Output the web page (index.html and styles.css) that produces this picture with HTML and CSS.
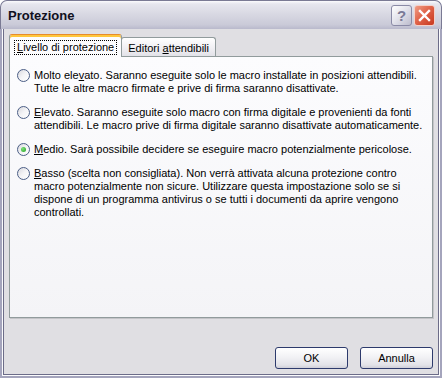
FILE: index.html
```html
<!DOCTYPE html>
<html lang="it">

<head>
    <meta charset="UTF-8">
    <title>Protezione</title>
    <link rel="stylesheet" href="styles.css">
</head>

<body>
    <div class="window">
        <!-- Title bar -->
        <div class="titlebar">
            <span class="title">Protezione</span>
            <div class="caption-buttons">
                <div class="cap help">?</div>
                <div class="cap close">
                    <svg width="13" height="13" viewBox="0 0 13 13">
                        <path d="M2 2 L11 11 M11 2 L2 11" stroke="#fff" stroke-width="2.4" stroke-linecap="square" />
                    </svg>
                </div>
            </div>
        </div>

        <div class="frame">
            <div class="client">
                <!-- Tabs -->
                <div class="tabs">
                    <div class="tab active"><span class="focus"><u>L</u>ivello di protezione</span></div>
                    <div class="tab">Editori <u>a</u>ttendibili</div>
                </div>

                <div class="panel">
                    <div class="option">
                        <span class="radio"></span>
                        <span class="text">Molto ele<u>v</u>ato. Saranno eseguite solo le macro installate in posizioni attendibili.<br>Tutte le altre macro firmate e prive di firma saranno disattivate.</span>
                    </div>
                    <div class="option">
                        <span class="radio"></span>
                        <span class="text"><u>E</u>levato. Saranno eseguite solo macro con firma digitale e provenienti da fonti<br>attendibili. Le macro prive di firma digitale saranno disattivate automaticamente.</span>
                    </div>
                    <div class="option">
                        <span class="radio checked"></span>
                        <span class="text"><u>M</u>edio. Sarà possibile decidere se eseguire macro potenzialmente pericolose.</span>
                    </div>
                    <div class="option">
                        <span class="radio"></span>
                        <span class="text"><u>B</u>asso (scelta non consigliata). Non verrà attivata alcuna protezione contro<br>macro potenzialmente non sicure. Utilizzare questa impostazione solo se si<br>dispone di un programma antivirus o se tutti i documenti da aprire vengono<br>controllati.</span>
                    </div>
                </div>

                <!-- Buttons -->
                <div class="actions">
                    <button class="btn">OK</button>
                    <button class="btn">Annulla</button>
                </div>
            </div>
        </div>
    </div>
</body>

</html>
```

FILE: styles.css
```css
/* Page */
body {
    margin: 0;
    background: #ffffff;
    font-family: "Liberation Sans", sans-serif;
    font-size: 11px;
    color: #000000;
}

/* Window frame */
.window {
    width: 442px;
    height: 378px;
    display: flex;
    flex-direction: column;
    background: #a4a4bc;
    border-radius: 7px 7px 0 0;
    overflow: hidden;
}

.titlebar {
    height: 29px;
    box-sizing: border-box;
    display: flex;
    align-items: center;
    justify-content: space-between;
    padding: 0 6px 0 7px;
    border: 1px solid #7a7a94;
    border-bottom: none;
    border-radius: 7px 7px 0 0;
    background: linear-gradient(#fbfbfd 0, #e6e6ee 3px, #d9d9e3 45%, #cacad8 85%, #b9b9cc 100%);
}

.title {
    font-weight: bold;
    font-size: 13px;
    color: #101020;
    margin-top: 1px;
}

.caption-buttons {
    display: flex;
    gap: 2px;
}

.cap {
    width: 21px;
    height: 21px;
    box-sizing: border-box;
    border-radius: 3px;
    display: flex;
    align-items: center;
    justify-content: center;
}

.help {
    border: 1px solid #8a8aa6;
    background: linear-gradient(135deg, #ffffff 0%, #e4e4ec 45%, #bcbccd 100%);
    color: #7a7a96;
    font-weight: bold;
    font-size: 15px;
}

.close {
    border: 1px solid #f4d0c8;
    background: linear-gradient(135deg, #f09c84 0%, #e0644a 45%, #c8381e 100%);
}

.frame {
    flex: 1;
    display: flex;
    margin: 0 2px 2px;
    border: 1px solid #fbfbfd;
    border-top: none;
}

.client {
    flex: 1;
    display: flex;
    flex-direction: column;
    padding: 5px 5px 5px;
    border: 1px solid #6c6c88;
    border-top: none;
    background: #e0dfe3;
}

/* Tabs */
.tabs {
    height: 22px;
    display: flex;
    align-items: flex-end;
    position: relative;
    z-index: 2;
}

.tab {
    height: 19px;
    box-sizing: border-box;
    padding: 4px 6px 1px;
    line-height: 13px;
    border: 1px solid #919b9c;
    border-bottom: none;
    border-radius: 3px 3px 0 0;
    margin-left: -1px;
    background: linear-gradient(#ffffff, #ecebf0 70%, #e2e2e8);
}

.tab.active {
    height: 23px;
    margin-left: 0;
    margin-bottom: -1px;
    padding: 5px 4px 2px 4px;
    border-top: 1px solid #e68b2c;
    box-shadow: inset 0 2px #ffc73c;
    background: #fcfcfe;
    position: relative;
    z-index: 3;
}

.focus {
    display: inline-block;
    padding: 0 2px;
    line-height: 13px;
    border: 1px dotted #000000;
}

/* Tab body */
.panel {
    flex: 1;
    padding: 12px 7px 0;
    border: 1px solid #919b9c;
    box-shadow: 1px 1px 0 #c4c4c8;
    background: linear-gradient(#fcfcfe, #f4f4f7);
}

.option {
    display: flex;
    gap: 4px;
    margin-bottom: 11px;
    line-height: 13px;
}

.radio {
    flex: none;
    width: 13px;
    height: 13px;
    box-sizing: border-box;
    border: 1px solid #4b5e86;
    border-radius: 50%;
    background: linear-gradient(135deg, #d8d8de 0%, #f4f4f6 50%, #ffffff 100%);
    display: flex;
    align-items: center;
    justify-content: center;
}

.radio.checked::after {
    content: "";
    width: 5px;
    height: 5px;
    border-radius: 50%;
    background: radial-gradient(circle at 35% 35%, #7ee07a, #21a121);
}

/* Dialog buttons */
.actions {
    display: flex;
    justify-content: flex-end;
    gap: 12px;
    margin-top: 29px;
}

.btn {
    width: 73px;
    height: 22px;
    padding: 0;
    border: 1px solid #2d3a6c;
    border-radius: 3px;
    background: linear-gradient(#ffffff, #f2f2f5 45%, #e2e2e8 85%, #cfcfd8);
    font-family: "Liberation Sans", sans-serif;
    font-size: 11px;
    color: #000000;
}
```
